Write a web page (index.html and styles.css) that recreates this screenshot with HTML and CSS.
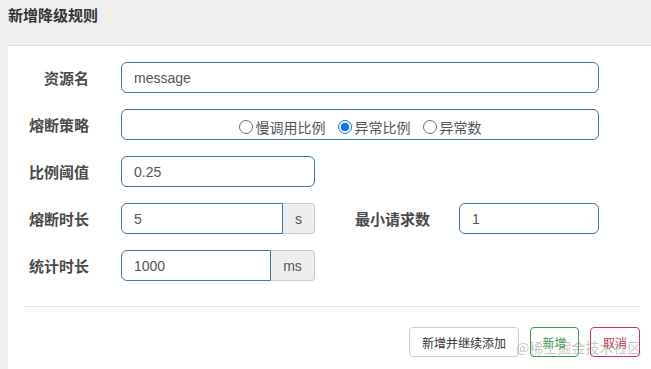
FILE: index.html
```html
<!DOCTYPE html>
<html lang="zh">
<head>
<meta charset="utf-8">
<title>新增降级规则</title>
<link rel="stylesheet" href="styles.css">
</head>
<body>
<div class="header"><h1 class="title">新增降级规则</h1></div>
<div class="panel">
  <form class="form">
    <div class="row">
      <label class="label">资源名</label>
      <div class="control wide"><input class="input" value="message"></div>
    </div>
    <div class="row">
      <label class="label">熔断策略</label>
      <div class="control wide box radios">
        <span class="radio"><span class="dot"></span>慢调用比例</span>
        <span class="radio checked"><span class="dot"></span>异常比例</span>
        <span class="radio"><span class="dot"></span>异常数</span>
      </div>
    </div>
    <div class="row">
      <label class="label">比例阈值</label>
      <div class="control mid"><input class="input" value="0.25"></div>
    </div>
    <div class="row">
      <label class="label">熔断时长</label>
      <div class="control mid group">
        <input class="input joined" value="5"><span class="addon addon-s">s</span>
      </div>
      <label class="label2">最小请求数</label>
      <div class="control small"><input class="input" value="1"></div>
    </div>
    <div class="row">
      <label class="label">统计时长</label>
      <div class="control mid group">
        <input class="input joined" value="1000"><span class="addon addon-ms">ms</span>
      </div>
    </div>
    <hr class="rule">
    <div class="actions">
      <button type="button" class="btn">新增并继续添加</button>
      <button type="button" class="btn btn-ok">新增</button>
      <button type="button" class="btn btn-cancel">取消</button>
    </div>
  </form>
  <div class="watermark">@稀土掘金技术社区</div>
</div>
</body>
</html>
```

FILE: styles.css
```css
* { box-sizing: border-box; }
html, body { margin: 0; padding: 0; }
body {
  background: #efefef;
  font-family: "Liberation Sans", "Noto Sans CJK SC", sans-serif;
  width: 651px;
  height: 369px;
  overflow: hidden;
}
.header {
  height: 45px;
  padding: 5px 8px 0;
}
.title {
  margin: 0;
  font-size: 15px;
  line-height: 20px;
  font-weight: bold;
  color: #333;
  font-family: "Noto Sans CJK SC", sans-serif;
}
.panel {
  position: relative;
  margin-left: 8px;
  background: #fff;
  border-top: 1px solid #dcdcdc;
  height: 324px;
}
.form {
  padding: 16px 11px 0 16px;
  display: flex;
  flex-direction: column;
}
.row {
  display: flex;
  align-items: center;
  height: 31px;
  margin-bottom: 16px;
}
.label, .label2 {
  font-family: "Noto Sans CJK SC", sans-serif;
  font-weight: bold;
  font-size: 15px;
  color: #4a4a4a;
  white-space: nowrap;
}
.label {
  width: 65px;
  text-align: right;
  margin-right: 32px;
}
.label2 {
  margin-left: 40px;
  margin-right: 28px;
  width: 76px;
}
.control { height: 31px; display: flex; }
.wide { width: 478px; }
.mid { width: 194px; }
.small { width: 140px; }
.input {
  width: 100%;
  height: 31px;
  border: 1px solid #3d76a6;
  border-radius: 6px;
  padding: 0 12px;
  font-family: "Liberation Sans", sans-serif;
  font-size: 14px;
  color: #555;
  background: #fff;
  outline: none;
}
.box {
  border: 1px solid #3d76a6;
  border-radius: 6px;
}
.radios {
  justify-content: center;
  align-items: center;
  padding-top: 5px;
  font-family: "Noto Sans CJK SC", sans-serif;
  font-size: 14px;
  color: #555;
}
.radio {
  display: inline-flex;
  align-items: center;
  margin-right: 12px;
}
.radio:last-child { margin-right: 0; }
.radio .dot {
  width: 14px;
  height: 14px;
  border-radius: 50%;
  border: 1px solid #707070;
  margin-right: 3px;
  background: #fff;
}
.radio.checked .dot {
  border: 1px solid #1a73e8;
  background: radial-gradient(circle, #1a73e8 0 4px, #fff 4.6px);
}
.group .joined {
  flex: 1;
  border-radius: 6px 0 0 6px;
}
.addon {
  display: flex;
  align-items: center;
  justify-content: center;
  height: 31px;
  background: #eee;
  border: 1px solid #ccc;
  border-left: none;
  border-radius: 0 4px 4px 0;
  font-size: 14px;
  color: #555;
}
.addon-s { width: 32px; }
.addon-ms { width: 44px; }
.rule {
  margin: 9px 0 0;
  border: 0;
  border-top: 1px solid #e3e3e3;
  height: 0;
}
.actions {
  display: flex;
  justify-content: flex-end;
  gap: 11px;
  margin-top: 20px;
}
.btn {
  height: 30px;
  padding: 0 12px;
  border: 1px solid #ccc;
  border-radius: 4px;
  background: #fff;
  font-family: "Noto Sans CJK SC", sans-serif;
  font-size: 12px;
  color: #333;
}
.btn-ok { border-color: #3a9b4f; color: #3a9b4f; width: 49px; padding: 0; }
.btn-cancel { border-color: #c9374b; color: #c9374b; width: 50px; padding: 0; }
.watermark {
  position: absolute;
  left: 508px;
  top: 291px;
  font-family: "Noto Sans CJK SC", sans-serif;
  font-size: 14px;
  color: rgba(150, 150, 150, 0.55);
  pointer-events: none;
  white-space: nowrap;
}
```
